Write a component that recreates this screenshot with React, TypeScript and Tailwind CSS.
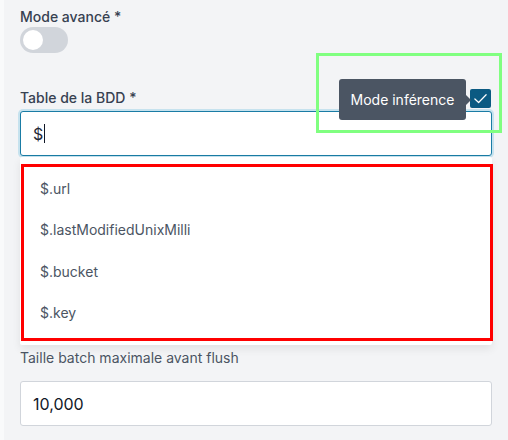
const SUGGESTIONS = ['$.url', '$.lastModifiedUnixMilli', '$.bucket', '$.key'];

export default function App() {
  return (
    <div
      className="relative h-[440px] w-[508px] overflow-hidden bg-[#f3f4f6]"
      style={{ fontFamily: 'Inter, Roboto, "Liberation Sans", sans-serif' }}
    >
      {/* left edge strip */}
      <div className="absolute inset-y-0 left-0 w-[4px] bg-[#f9fafb]" />

      <div className="flex flex-col pt-[7px] pr-4 pl-5">
        {/* Mode avancé */}
        <label className="text-sm leading-5 font-medium text-[#374151]">Mode avancé *</label>
        <div className="flex h-[26px] w-12 items-center rounded-full bg-[#d1d5db] px-[3px]">
          <div className="h-5 w-5 rounded-full bg-white" />
        </div>

        {/* Table de la BDD */}
        <div className="mt-[35px] flex h-5 items-center justify-between">
          <label className="text-sm leading-5 font-medium text-[#374151]">Table de la BDD *</label>
          <div className="mr-px flex h-[19px] w-[21px] items-center justify-center rounded-[2px] bg-[#0b5a82]">
            <svg width="15" height="15" viewBox="0 0 16 16" fill="none">
              <path d="M2 8.5l4 3.8 8-8.3" stroke="white" strokeWidth="1.3" strokeLinecap="round" strokeLinejoin="round" />
            </svg>
          </div>
        </div>
        <div className="mt-[3px] flex h-[45px] items-center rounded-[3px] border border-[#1a7ca5] bg-white px-3 shadow-[0_0_0_2px_#c6e2ee]">
          <span className="text-base text-[#1f2937]">$</span>
          <span className="ml-px h-[19px] w-px bg-[#111827]" />
        </div>

        {/* suggestions */}
        <div className="relative mt-px h-[188px] rounded-[2px] bg-white pt-[11px] shadow-[0_4px_8px_rgba(0,0,0,0.08)]">
          {SUGGESTIONS.map((s) => (
            <div key={s} className="flex h-[41.5px] items-center pl-5 text-sm text-[#4b5563]">
              {s}
            </div>
          ))}
          <div className="pointer-events-none absolute top-[7px] right-[-1px] bottom-[4px] left-px border-[3px] border-[#ff0000]" />
        </div>

        {/* Taille batch */}
        <label className="mt-[3px] text-sm leading-5 text-[#4b5563]">Taille batch maximale avant flush</label>
        <div className="mt-[13px] flex h-[45px] items-center rounded-[3px] border border-[#d1d5db] bg-white px-3">
          <span className="text-base text-[#111827]">10,000</span>
        </div>
      </div>

      {/* tooltip */}
      <div className="absolute top-[79px] left-[339px] flex h-[41px] w-[127px] items-center justify-center rounded-[3px] bg-[#4b5563] text-sm text-white">
        Mode inférence
        <div className="absolute top-1/2 right-[-5px] h-0 w-0 -translate-y-1/2 border-y-[5px] border-l-[5px] border-y-transparent border-l-[#4b5563]" />
      </div>

      {/* annotation */}
      <div className="pointer-events-none absolute top-[53px] left-[316px] h-[80px] w-[186px] border-[3px] border-[#80ff80]" />
    </div>
  );
}
